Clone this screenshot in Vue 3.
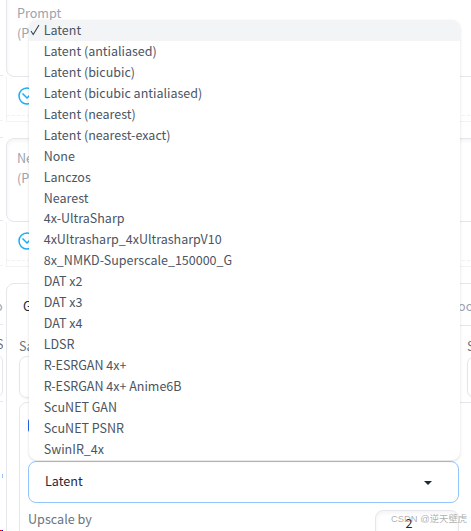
<template>
    <div class="page">
        <div class="neighbor">
            <div class="edge edge-prompt"></div>
            <div class="edge edge-tools"></div>
            <div class="edge edge-negative"></div>
            <div class="edge edge-tools"></div>
            <div class="edge-tab">o</div>
            <div class="edge-label">S</div>
            <div class="edge-input"></div>
            <div class="edge-panel"><i></i></div>
            <div class="edge-strip"></div>
        </div>
        <div class="main">
            <template v-for="item in prompts" :key="item.name">
                <div class="prompt-box" :class="item.name">
                    <div>{{ item.title }}</div>
                    <div>{{ item.hint }}</div>
                </div>
                <div class="tools">
                    <div class="tools-row">
                        <svg width="18" height="18" viewBox="0 0 18 18" fill="none" stroke="#18aef5" stroke-width="1.5">
                            <circle cx="9" cy="9" r="8" />
                            <path d="M4.5 6.5l4.5 4.5 5-5" />
                        </svg>
                    </div>
                </div>
            </template>
            <div class="settings">
                <div class="tabs"><span class="tab-active">G</span><span class="tab-last">oo</span></div>
                <div class="fields">
                    <div class="field field-method">
                        <div class="label">Sa</div>
                        <div class="field-input"></div>
                    </div>
                    <div class="field field-steps">
                        <div class="label">S</div>
                        <div class="field-input"></div>
                    </div>
                </div>
                <div class="hires">
                    <div class="checkbox"></div>
                    <div class="select">
                        <span>{{ options[0] }}</span>
                        <svg width="8" height="4" viewBox="0 0 8 4"><path d="M0 0h8L4 4z" fill="#1f2937" /></svg>
                    </div>
                    <div class="upscale">
                        <span class="label">Upscale by</span>
                        <div class="number">2</div>
                    </div>
                </div>
            </div>
        </div>
        <div class="menu">
            <div class="option" v-for="(item, index) in options" :key="item" :class="{ selected: index === 0 }">
                <span class="check"><svg v-if="index === 0" width="10" height="12" viewBox="0 0 10 12" fill="none" stroke="#374151"><path d="M1 7l2.2 3.5L9 1" stroke-width="1.1" /></svg></span>
                <span>{{ item }}</span>
            </div>
        </div>
        <div class="watermark">CSDN @逆天壁虎</div>
    </div>
</template>

<script setup>
const prompts = [
    { name: 'positive', title: 'Prompt', hint: '(P' },
    { name: 'negative', title: 'Ne', hint: '(P' },
]

const options = [
    'Latent',
    'Latent (antialiased)',
    'Latent (bicubic)',
    'Latent (bicubic antialiased)',
    'Latent (nearest)',
    'Latent (nearest-exact)',
    'None',
    'Lanczos',
    'Nearest',
    '4x-UltraSharp',
    '4xUltrasharp_4xUltrasharpV10',
    '8x_NMKD-Superscale_150000_G',
    'DAT x2',
    'DAT x3',
    'DAT x4',
    'LDSR',
    'R-ESRGAN 4x+',
    'R-ESRGAN 4x+ Anime6B',
    'ScuNET GAN',
    'ScuNET PSNR',
    'SwinIR_4x',
]
</script>

<style>
body {
    margin: 0;
    background: #fff;
}
</style>

<style scoped>
.page {
    position: relative;
    display: flex;
    gap: 3px;
    width: 471px;
    height: 531px;
    overflow: hidden;
    font-family: "Noto Sans CJK SC", sans-serif;
    font-size: 12.6px;
    color: #4b5563;
}

.page * {
    box-sizing: border-box;
}

.neighbor {
    flex: none;
    display: flex;
    flex-direction: column;
    width: 3px;
    overflow: hidden;
}

.edge {
    flex: none;
    border-bottom: 1px solid #e5e7eb;
}

.edge-prompt {
    height: 76px;
}

.edge-tools {
    height: 45px;
    border-color: #f1f2f4;
}

.edge-negative {
    height: 100px;
    background: linear-gradient(#e5e7eb, #e5e7eb) 0 16px / 100% 1px no-repeat;
}

.edge-tab {
    flex: none;
    height: 59px;
    padding-top: 31px;
    line-height: 18px;
    color: #9ca3af;
    text-indent: -5px;
    border-bottom: 1px solid #e5e7eb;
}

.edge-label {
    flex: none;
    height: 30px;
    padding-top: 9px;
    line-height: 20px;
    text-indent: -4px;
    color: #6b7280;
}

.edge-input {
    flex: none;
    width: 12px;
    height: 42px;
    margin-left: -9px;
    border: 1px solid #e5e7eb;
    border-radius: 8px;
}

.edge-panel {
    flex: 1;
    margin-top: 4px;
    padding-top: 72px;
    border-top: 1px solid #e5e7eb;
}

.edge-panel i {
    display: block;
    width: 3px;
    height: 4px;
    border-right: 1px solid #93c5fd;
}

.edge-strip {
    flex: none;
    height: 1px;
    background: linear-gradient(90deg, #f00 33%, #0a0 33% 66%, #00f 66%);
}

.main {
    flex: none;
    display: flex;
    flex-direction: column;
    width: 480px;
}

.prompt-box {
    flex: none;
    padding: 10px;
    line-height: 20px;
    color: #9ca3af;
    border: 1px solid #e5e7eb;
    border-radius: 8px;
    box-shadow: inset 0 2px 4px rgba(0, 0, 0, 0.05);
}

.positive {
    height: 87px;
    margin-top: -10px;
    padding-top: 12px;
}

.negative {
    height: 84px;
    margin-top: 16px;
    padding-top: 9px;
}

.tools {
    flex: none;
    height: 45px;
    border: 1px solid #f1f2f4;
    border-top: none;
}

.tools-row {
    height: 39px;
    padding: 10px 0 0 11px;
    border-bottom: 1px dashed #f0f1f3;
}

.tools-row svg {
    display: block;
}

.settings {
    flex: none;
    height: 300px;
    margin-top: 16px;
    padding-left: 12px;
    border: 1px solid #e5e7eb;
    border-radius: 8px;
}

.tabs {
    display: flex;
    height: 42px;
    line-height: 20px;
}

.tab-active {
    width: 435px;
    padding: 12px 0 0 4px;
    color: #1f2937;
}

.tab-last {
    flex: 1;
    padding: 12px 0 0 4px;
    color: #9ca3af;
    border-bottom: 1px solid #e5e7eb;
}

.fields {
    display: flex;
    gap: 16px;
    height: 72px;
    padding-top: 10px;
}

.field {
    flex: none;
}

.field-method {
    width: 432px;
}

.field-steps {
    width: 60px;
}

.label {
    line-height: 20px;
    color: #6b7280;
    white-space: nowrap;
}

.field-input {
    height: 42px;
    border: 1px solid #e5e7eb;
    border-radius: 8px;
    box-shadow: 0 1px 2px rgba(0, 0, 0, 0.05);
}

.hires {
    height: 200px;
    margin-top: 4px;
    padding: 16px 0 0 8px;
    border: 1px solid #e5e7eb;
    border-radius: 8px;
}

.checkbox {
    width: 13px;
    height: 13px;
    border-radius: 2px;
    background: #2563eb;
}

.select {
    display: flex;
    align-items: center;
    justify-content: space-between;
    width: 431px;
    height: 42px;
    margin-top: 29px;
    padding: 0 26px 0 16px;
    color: #1f2937;
    border: 1px solid #93c5fd;
    border-radius: 8px;
}

.select span {
    padding-bottom: 3px;
}

.select svg {
    margin-top: 2px;
}

.upscale {
    display: flex;
    justify-content: space-between;
    width: 431px;
    padding-top: 7px;
}

.upscale .label {
    line-height: 17px;
}

.number {
    width: 84px;
    height: 30px;
    padding-right: 16px;
    line-height: 23px;
    text-align: center;
    color: #1f2937;
    border: 1px solid #e5e7eb;
    border-radius: 8px;
    box-shadow: inset 0 2px 4px rgba(0, 0, 0, 0.05);
}

/* dropdown list opened above the select */
.menu {
    position: absolute;
    top: 20px;
    left: 29px;
    width: 431px;
    height: 440px;
    overflow: hidden;
    font-size: 12.5px;
    background: #fff;
    border-radius: 8px;
    box-shadow: 0 1px 3px rgba(0, 0, 0, 0.14);
}

.option {
    display: flex;
    height: 20.95px;
    line-height: 20.4px;
    white-space: nowrap;
}

.selected {
    background: #f3f4f6;
}

.check {
    width: 14.7px;
    padding-left: 1px;
}

.check svg {
    display: block;
    margin-top: 4px;
}

.watermark {
    position: absolute;
    top: 512px;
    left: 391px;
    font-family: "Liberation Sans", "Noto Sans CJK SC", sans-serif;
    font-size: 9.4px;
    line-height: 14px;
    color: rgba(130, 130, 130, 0.65);
    white-space: nowrap;
}
</style>
